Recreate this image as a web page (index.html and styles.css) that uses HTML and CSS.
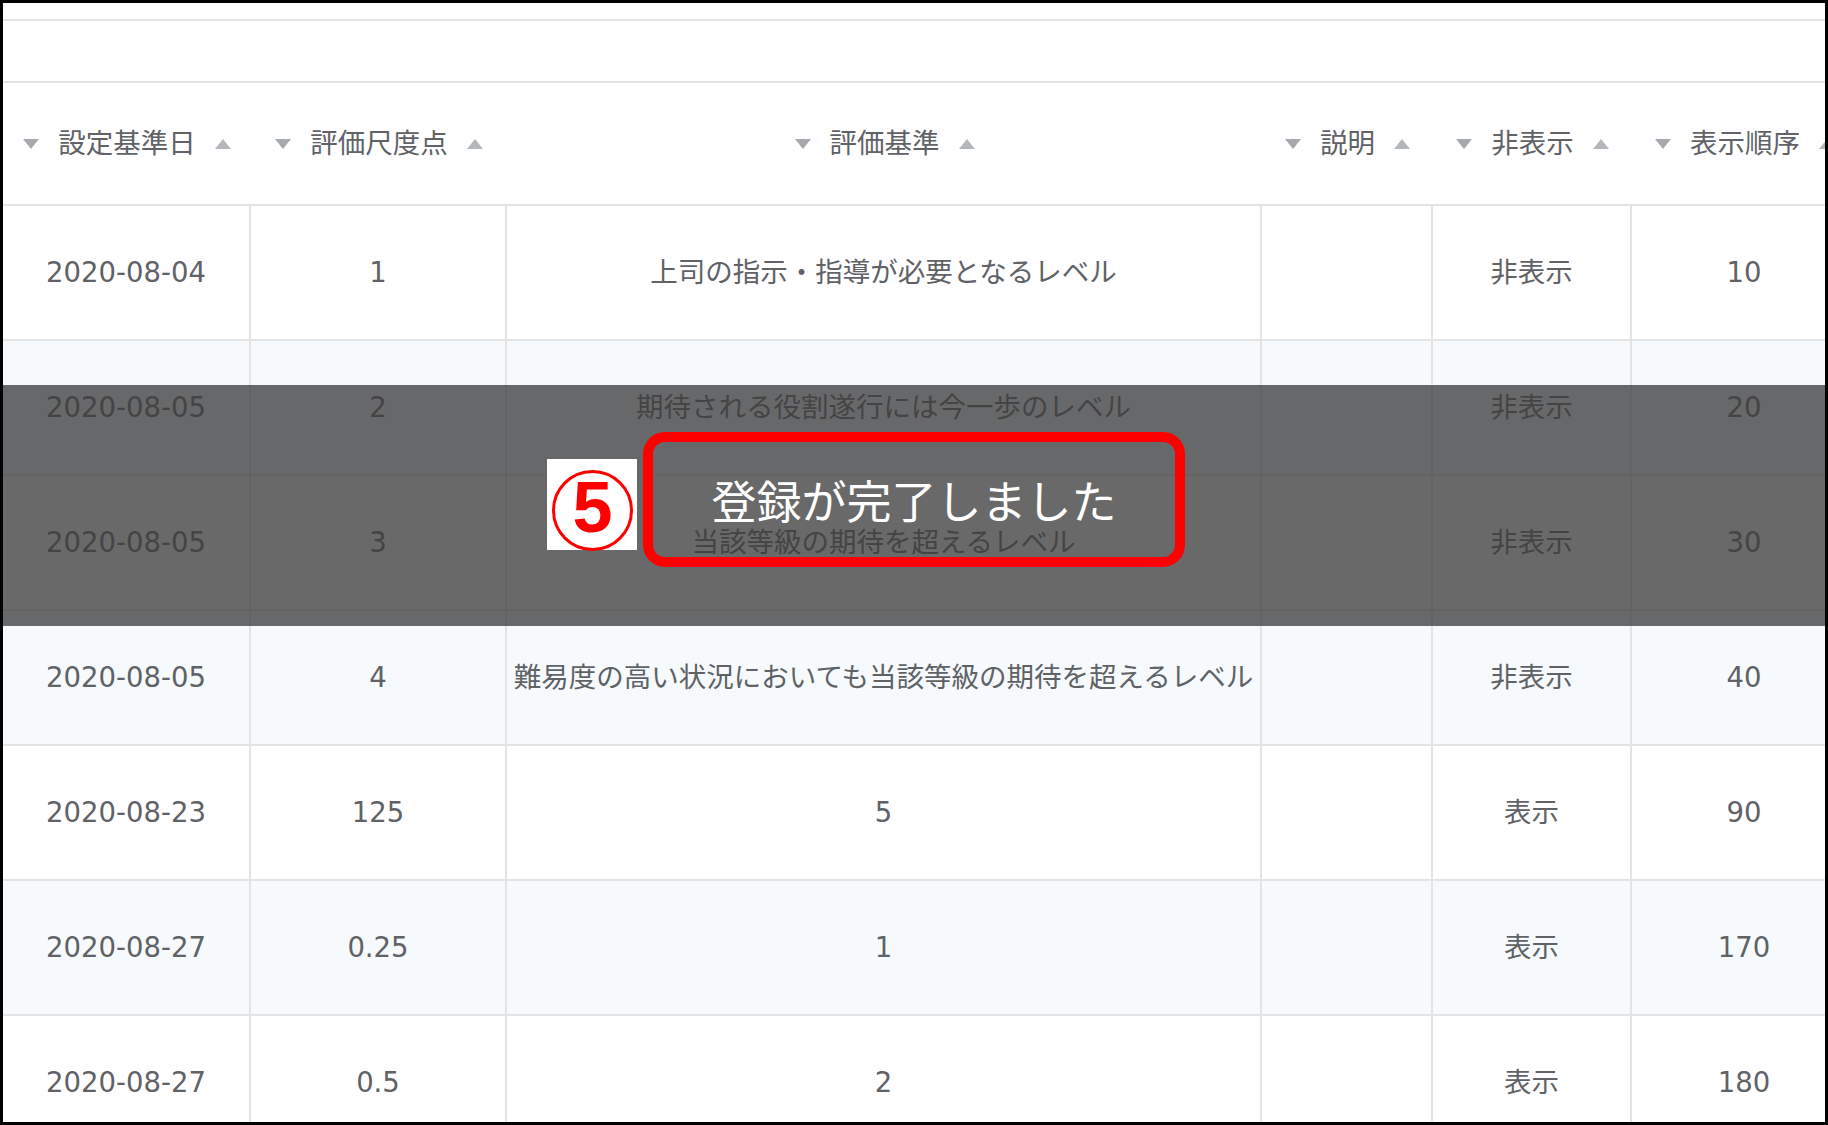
FILE: index.html
```html
<!DOCTYPE html>
<html lang="ja">
<head>
<meta charset="utf-8">
<title>評価尺度</title>
<link rel="stylesheet" href="styles.css">
</head>
<body>
<div class="frame">
  <div class="topbar"></div>
  <div class="toolbar"></div>
  <div class="table">
    <div class="thead">
      <div class="th"><span class="sort-desc"></span><span class="th-label">設定基準日</span><span class="sort-asc"></span></div>
      <div class="th"><span class="sort-desc"></span><span class="th-label">評価尺度点</span><span class="sort-asc"></span></div>
      <div class="th"><span class="sort-desc"></span><span class="th-label">評価基準</span><span class="sort-asc"></span></div>
      <div class="th"><span class="sort-desc"></span><span class="th-label">説明</span><span class="sort-asc"></span></div>
      <div class="th"><span class="sort-desc"></span><span class="th-label">非表示</span><span class="sort-asc"></span></div>
      <div class="th"><span class="sort-desc"></span><span class="th-label">表示順序</span><span class="sort-asc"></span></div>
    </div>
    <div class="tbody">
      <div class="tr">
        <div class="td">2020-08-04</div><div class="td">1</div><div class="td">上司の指示・指導が必要となるレベル</div><div class="td"></div><div class="td">非表示</div><div class="td">10</div>
      </div>
      <div class="tr">
        <div class="td">2020-08-05</div><div class="td">2</div><div class="td">期待される役割遂行には今一歩のレベル</div><div class="td"></div><div class="td">非表示</div><div class="td">20</div>
      </div>
      <div class="tr">
        <div class="td">2020-08-05</div><div class="td">3</div><div class="td">当該等級の期待を超えるレベル</div><div class="td"></div><div class="td">非表示</div><div class="td">30</div>
      </div>
      <div class="tr">
        <div class="td">2020-08-05</div><div class="td">4</div><div class="td">難易度の高い状況においても当該等級の期待を超えるレベル</div><div class="td"></div><div class="td">非表示</div><div class="td">40</div>
      </div>
      <div class="tr">
        <div class="td">2020-08-23</div><div class="td">125</div><div class="td">5</div><div class="td"></div><div class="td">表示</div><div class="td">90</div>
      </div>
      <div class="tr">
        <div class="td">2020-08-27</div><div class="td">0.25</div><div class="td">1</div><div class="td"></div><div class="td">表示</div><div class="td">170</div>
      </div>
      <div class="tr">
        <div class="td">2020-08-27</div><div class="td">0.5</div><div class="td">2</div><div class="td"></div><div class="td">表示</div><div class="td">180</div>
      </div>
    </div>
  </div>
  <div class="overlay">
    <div class="toast">
      <div class="step"><span class="step-ring">5</span></div>
      <span class="toast-text">登録が完了しました</span>
    </div>
  </div>
</div>
</body>
</html>
```

FILE: styles.css
```css
* { box-sizing: border-box; }

html, body {
  margin: 0;
  padding: 0;
}

body {
  width: 1828px;
  height: 1125px;
  overflow: hidden;
  background: #ffffff;
  font-family: "DejaVu Sans", "Noto Sans CJK JP", sans-serif;
  color: #606266;
}

.frame {
  position: relative;
  width: 1828px;
  height: 1125px;
  border: 3px solid #000000;
  overflow: hidden;
  background: #ffffff;
}

.topbar {
  height: 18px;
  border-bottom: 2px solid #e4e4e4;
}

.toolbar {
  height: 62px;
  border-bottom: 2px solid #e4e4e4;
}

.table {
  width: 1855px;
}

.thead,
.tr {
  display: grid;
  grid-template-columns: 248px 256px 755px 171px 199px 226px;
  border-bottom: 2px solid #e4e4e4;
}

.thead {
  height: 123px;
}

.th {
  display: flex;
  align-items: center;
  justify-content: center;
  gap: 19px;
  font-size: 27.5px;
  line-height: 33px;
  white-space: nowrap;
}

.sort-desc,
.sort-asc {
  display: block;
  width: 0;
  height: 0;
  border-left: 8px solid transparent;
  border-right: 8px solid transparent;
}

.sort-desc {
  border-top: 10px solid #a6a9ae;
}

.sort-asc {
  border-bottom: 10px solid #b4b7bc;
}

.tr {
  height: 135px;
}

.tr:nth-child(even) {
  background: #f6fafc;
}

.td {
  display: flex;
  align-items: center;
  justify-content: center;
  border-right: 2px solid #e4e4e4;
  font-size: 27.5px;
  line-height: 33px;
  white-space: nowrap;
  overflow: hidden;
}

.overlay {
  position: absolute;
  top: 382px;
  left: 0;
  right: 0;
  height: 241px;
  background: rgba(60, 60, 60, 0.77);
  display: flex;
  justify-content: center;
  align-items: flex-start;
  padding-top: 47px;
}

.toast {
  position: relative;
  width: 542px;
  height: 135px;
  border: 10px solid #ff0000;
  border-radius: 22px;
  display: flex;
  align-items: center;
  justify-content: center;
}

.toast-text {
  font-family: "Noto Sans CJK JP", sans-serif;
  font-size: 45px;
  line-height: 1.2;
  color: #ffffff;
  white-space: nowrap;
}

.step {
  position: absolute;
  left: -106px;
  top: 17px;
  width: 90px;
  height: 91px;
  background: #ffffff;
}

.step-ring {
  position: absolute;
  left: 5px;
  top: 11px;
  width: 81px;
  height: 81px;
  border: 3px solid #ff0000;
  border-radius: 50%;
  display: flex;
  align-items: center;
  justify-content: center;
  padding-bottom: 7px;
  font-family: "Liberation Sans", Arial, sans-serif;
  font-weight: 700;
  font-size: 72px;
  line-height: 1;
  color: #ff0000;
}
```
